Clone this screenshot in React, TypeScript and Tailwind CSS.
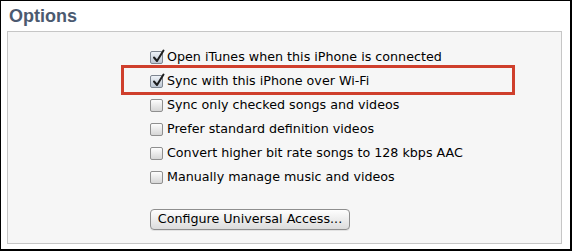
import React from 'react';

const items = [
  { label: 'Open iTunes when this iPhone is connected', checked: true },
  { label: 'Sync with this iPhone over Wi-Fi', checked: true },
  { label: 'Sync only checked songs and videos', checked: false },
  { label: 'Prefer standard definition videos', checked: false },
  { label: 'Convert higher bit rate songs to 128 kbps AAC', checked: false },
  { label: 'Manually manage music and videos', checked: false },
];

function Box({ checked }: { checked: boolean }) {
  return (
    <span
      className={
        'relative w-[13px] h-[13px] rounded-[2px] border shrink-0 bg-gradient-to-b ' +
        (checked ? 'border-[#7d8590] from-[#eef2f7] to-[#bcc6d2]' : 'border-[#8f8f8f] from-[#fdfdfd] to-[#d6d6d6]')
      }
    >
      {checked && (
        <svg className="absolute left-[1px] top-[-3px]" width="13" height="14" viewBox="0 0 13 14">
          <path d="M2 8.5 L5 12 L11.5 1.5" fill="none" stroke="#1e1e1e" strokeWidth="2" strokeLinecap="round" strokeLinejoin="round" />
        </svg>
      )}
    </span>
  );
}

export default function App() {
  return (
    <div
      className="w-[572px] h-[251px] bg-white border-l border-t border-r-2 border-b-2 border-black pl-[6px] pr-[8px] flex flex-col"
      style={{ fontFamily: '"DejaVu Sans", sans-serif' }}
    >
      <h2
        className="h-[30px] pt-[3px] pl-[2px] text-[18px] font-bold text-[#4b5a70] leading-[24px]"
        style={{ fontFamily: '"Liberation Sans", Arial, sans-serif' }}
      >
        Options
      </h2>
      <div className="relative h-[213px] border border-[#c6c6c6] bg-[#f6f6f6] pl-[142px] pt-[19px]">
        <div className="flex flex-col gap-[11px]">
          {items.map((it) => (
            <label key={it.label} className="flex items-center gap-[4px] h-[13px] text-[12.7px] text-black leading-none">
              <Box checked={it.checked} />
              <span>{it.label}</span>
            </label>
          ))}
        </div>
        <button className="mt-[25px] w-[200px] h-[21px] rounded-[4px] border border-[#8e8e8e] bg-gradient-to-b from-[#fefefe] to-[#dcdcdc] text-[12.7px] text-black leading-none shadow-[0_1px_0_rgba(0,0,0,0.08)]">
          Configure Universal Access...
        </button>
        <div className="absolute left-[113px] top-[33px] w-[394px] h-[30px] border-[3px] border-[#cf3f2c]" />
      </div>
    </div>
  );
}
